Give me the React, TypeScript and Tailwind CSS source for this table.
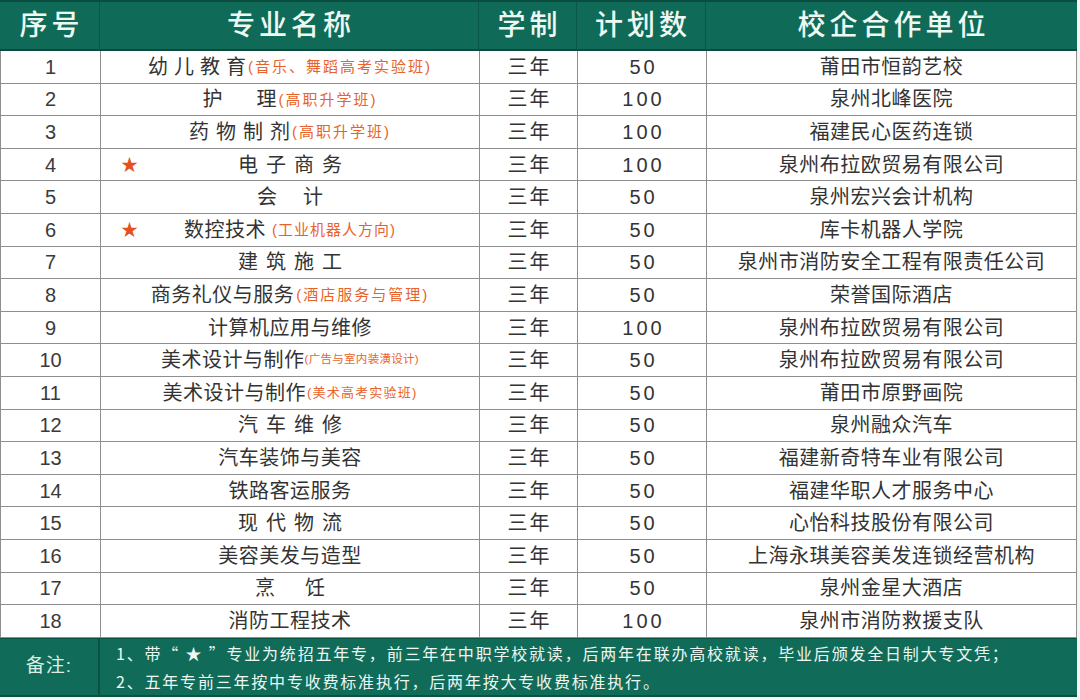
import React from "react";

type Row = {
  no: number;
  name: string;
  gap?: number;
  note?: string;
  noteCls?: string;
  star?: boolean;
  plan: string;
  partner: string;
};

const NOTE = "ml-[2px] text-[15px] tracking-[2px] text-[#e8632c]";

const ROWS: Row[] = [
  { no: 1, name: "幼儿教育", gap: 6, note: "(音乐、舞蹈高考实验班)", plan: "50", partner: "莆田市恒韵艺校" },
  { no: 2, name: "护理", gap: 34, note: "(高职升学班)", plan: "100", partner: "泉州北峰医院" },
  { no: 3, name: "药物制剂", gap: 7, note: "(高职升学班)", plan: "100", partner: "福建民心医药连锁" },
  { no: 4, name: "电子商务", gap: 8, star: true, plan: "100", partner: "泉州布拉欧贸易有限公司" },
  { no: 5, name: "会计", gap: 26, plan: "50", partner: "泉州宏兴会计机构" },
  {
    no: 6,
    name: "数控技术",
    star: true,
    note: "(工业机器人方向)",
    noteCls: "ml-[6px] text-[15px] tracking-[1px] text-[#e8632c]",
    plan: "50",
    partner: "库卡机器人学院",
  },
  { no: 7, name: "建筑施工", gap: 8, plan: "50", partner: "泉州市消防安全工程有限责任公司" },
  { no: 8, name: "商务礼仪与服务", note: "(酒店服务与管理)", plan: "50", partner: "荣誉国际酒店" },
  { no: 9, name: "计算机应用与维修", plan: "100", partner: "泉州布拉欧贸易有限公司" },
  {
    no: 10,
    name: "美术设计与制作",
    note: "(广告与室内装潢设计)",
    noteCls: "ml-[0px] text-[11.5px] tracking-[0.3px] text-[#e8632c]",
    plan: "50",
    partner: "泉州布拉欧贸易有限公司",
  },
  {
    no: 11,
    name: "美术设计与制作",
    note: "(美术高考实验班)",
    noteCls: "ml-[1px] text-[13px] tracking-[1.2px] text-[#e8632c]",
    plan: "50",
    partner: "莆田市原野画院",
  },
  { no: 12, name: "汽车维修", gap: 8, plan: "50", partner: "泉州融众汽车" },
  { no: 13, name: "汽车装饰与美容", plan: "50", partner: "福建新奇特车业有限公司" },
  { no: 14, name: "铁路客运服务", plan: "50", partner: "福建华职人才服务中心" },
  { no: 15, name: "现代物流", gap: 8, plan: "50", partner: "心怡科技股份有限公司" },
  { no: 16, name: "美容美发与造型", plan: "50", partner: "上海永琪美容美发连锁经营机构" },
  { no: 17, name: "烹饪", gap: 30, plan: "50", partner: "泉州金星大酒店" },
  { no: 18, name: "消防工程技术", plan: "100", partner: "泉州市消防救援支队" },
];

const COLS = "grid grid-cols-[100px_379px_98px_129px_1fr]";

function Spaced({ text, gap }: { text: string; gap: number }) {
  return (
    <span className="flex" style={{ gap }}>
      {text.split("").map((c, i) => (
        <span key={i}>{c}</span>
      ))}
    </span>
  );
}

function NameCell({ row }: { row: Row }) {
  return (
    <div className="relative flex items-center justify-center border-r border-[#8e8e8e]">
      {row.star && (
        <span className="absolute left-[20px] top-1/2 -translate-y-1/2 text-[17px] text-[#e2521d]">★</span>
      )}
      {row.gap ? <Spaced text={row.name} gap={row.gap} /> : <span className="tracking-[0.5px]">{row.name}</span>}
      {row.note && <span className={row.noteCls ?? NOTE}>{row.note}</span>}
    </div>
  );
}

export default function App() {
  return (
    <div className="h-[700px] w-[1080px] overflow-hidden bg-[#f4f6f5] font-['Liberation_Sans','Noto_Sans_CJK_SC',sans-serif] text-[#333333]">
      <div className="w-[1077px] bg-white">
        <div className={`${COLS} h-[51px] border-t-[2px] border-b-[2px] border-t-[#0a4d3f] border-b-[#0b4a3d] bg-[#0f6b58] text-[28px] font-medium tracking-[4px] text-[#eef8f3]`}>
          <div className="flex items-center justify-center border-r border-[#0b5646] pl-[4px]">序号</div>
          <div className="flex items-center justify-center border-r border-[#0b5646] pl-[4px]">专业名称</div>
          <div className="flex items-center justify-center border-r border-[#0b5646] pl-[4px]">学制</div>
          <div className="flex items-center justify-center border-r border-[#0b5646] pl-[4px]">计划数</div>
          <div className="flex items-center justify-center pl-[4px]">校企合作单位</div>
        </div>
        <div className="border-l border-r border-[#8e8e8e]">
          {ROWS.map((r) => (
            <div key={r.no} className={`${COLS} h-[32.6px] border-b border-[#8e8e8e] text-[20px] leading-none`}>
              <div className="flex items-center justify-center border-r border-[#8e8e8e] font-['Liberation_Sans',sans-serif] text-[20px] text-[#3a3a3a]">
                {r.no}
              </div>
              <NameCell row={r} />
              <div className="flex items-center justify-center border-r border-[#8e8e8e] tracking-[2px] pl-[2px]">三年</div>
              <div className="flex items-center justify-center border-r border-[#8e8e8e] font-light tracking-[3px] pl-[3px]">
                {r.plan}
              </div>
              <div className="flex items-center justify-center tracking-[0.5px]">{r.partner}</div>
            </div>
          ))}
        </div>
        <div className="grid h-[59px] grid-cols-[100px_1fr] border-t border-b-[2px] border-[#0a5142] bg-[#116b59] text-[#eef7f2]">
          <div className="flex items-center justify-center border-r-[2px] border-[#0a5142] text-[19px] tracking-[1px] text-[#d9efe4]">
            备注:
          </div>
          <div className="flex flex-col justify-center gap-[6px] pl-[16px] font-['Noto_Sans_CJK_SC',sans-serif] text-[16px] leading-[22px] tracking-[1.8px]">
            <div>1、带“ ★ ”专业为统招五年专，前三年在中职学校就读，后两年在联办高校就读，毕业后颁发全日制大专文凭；</div>
            <div>2、五年专前三年按中专收费标准执行，后两年按大专收费标准执行。</div>
          </div>
        </div>
      </div>
    </div>
  );
}
